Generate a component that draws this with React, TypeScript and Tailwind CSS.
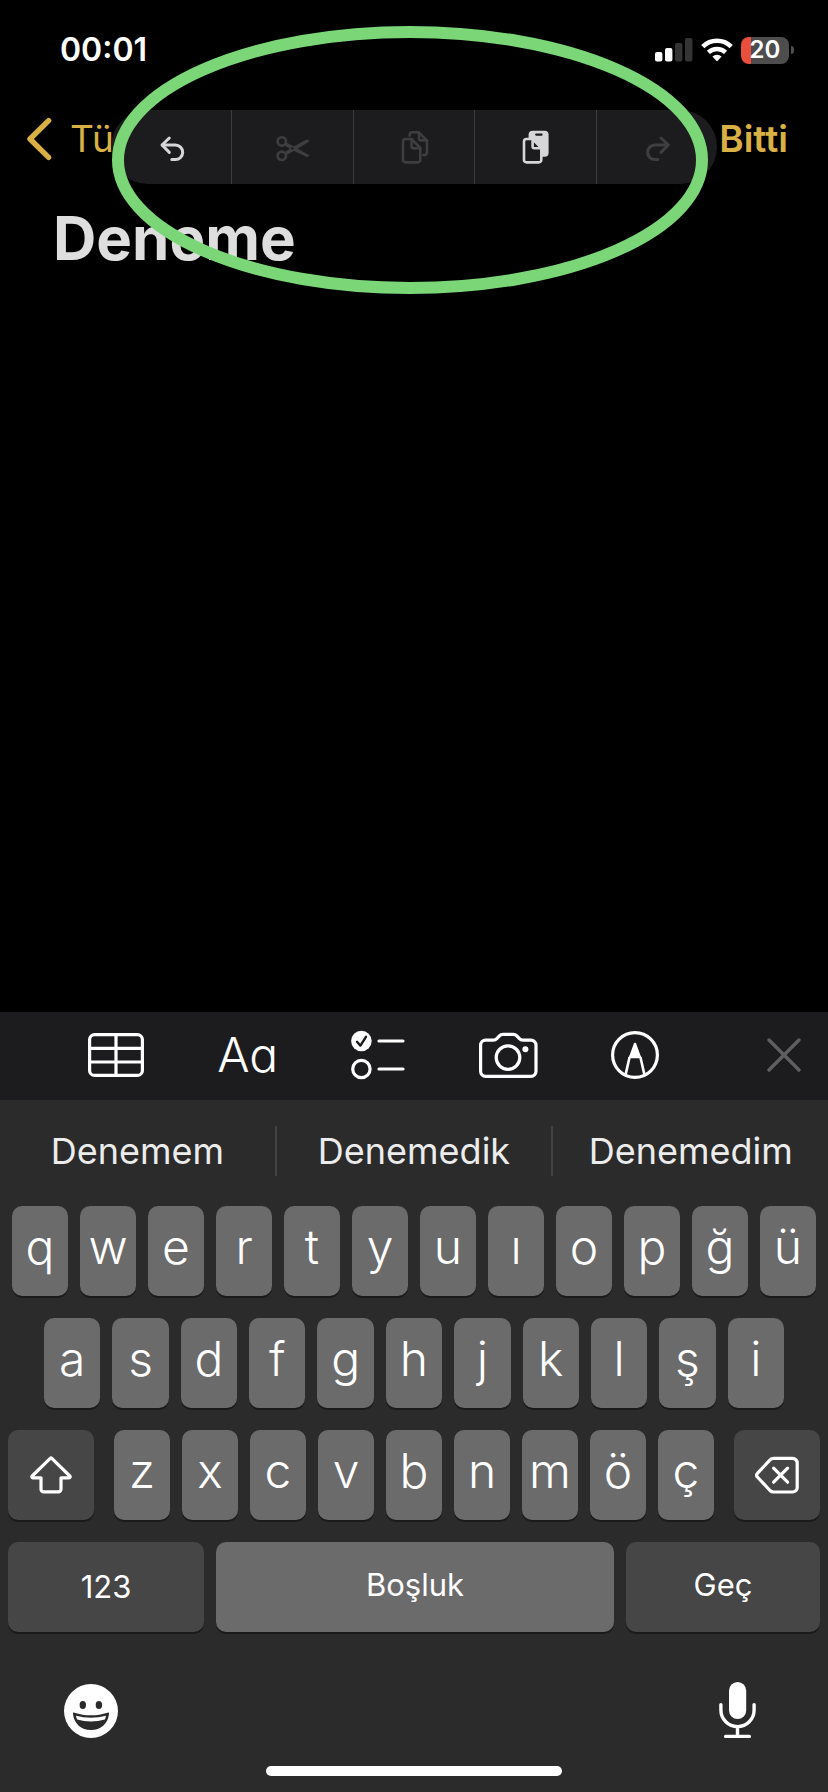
import type { ReactNode } from "react";

const topRow = ["q", "w", "e", "r", "t", "y", "u", "ı", "o", "p", "ğ", "ü"];
const homeRow = ["a", "s", "d", "f", "g", "h", "j", "k", "l", "ş", "i"];
const bottomRow = ["z", "x", "c", "v", "b", "n", "m", "ö", "ç"];
const suggestions = ["Denemem", "Denemedik", "Denemedim"];

function StatusBar() {
  return (
    <header className="flex h-24 items-center justify-between pt-1 pr-[34px] pl-[60px]">
      <time className="text-[32px] leading-10 font-semibold">00:01</time>
      <div className="flex items-center gap-2">
        <svg width="38" height="24" viewBox="0 0 38 24" aria-label="Signal">
          <rect x="0" y="14" width="7.4" height="9.4" rx="2" fill="#fff" />
          <rect x="10" y="10" width="7.4" height="13.4" rx="2" fill="#fff" />
          <rect x="20" y="5" width="7.4" height="18.4" rx="2" fill="#343434" />
          <rect x="30" y="0" width="7.4" height="23.4" rx="2" fill="#343434" />
        </svg>
        <svg width="32" height="24" viewBox="0 0 32 24" fill="none" stroke="#fff" aria-label="Wi-Fi">
          <path d="M1.8 8.6a20.2 20.2 0 0 1 28.4 0" strokeWidth="4.6" />
          <path d="M7.4 14.4a12.4 12.4 0 0 1 17.2 0" strokeWidth="4.4" />
          <path d="M11.4 18.6a6.6 6.6 0 0 1 9.2 0L16 23.4z" fill="#fff" stroke="none" />
        </svg>
        <div className="flex items-center gap-0.5">
          <div className="flex h-[27px] w-12 items-center justify-center rounded-lg bg-linear-to-r from-[#ea4e3d] from-[10px] to-[#4d4d4d] to-[10px] text-2xl leading-7 font-semibold">
            20
          </div>
          <div className="h-2 w-[3px] rounded-r-full bg-[#4d4d4d]" />
        </div>
      </div>
    </header>
  );
}

function MenuCell({ label, disabled, children }: { label: string; disabled?: boolean; children: ReactNode }) {
  return (
    <button
      type="button"
      aria-label={label}
      disabled={disabled}
      className="flex flex-1 items-center justify-center border-[#3c3c3e] text-[#d6d6d8] not-last:border-r disabled:text-[#3e3e41]"
    >
      <svg
        width="36"
        height="36"
        viewBox="0 0 36 36"
        fill="none"
        stroke="currentColor"
        strokeWidth="2.6"
        strokeLinecap="round"
        strokeLinejoin="round"
      >
        {children}
      </svg>
    </button>
  );
}

const frontPage =
  "M15.6 10H9.5A2.5 2.5 0 0 0 7 12.5v18.4a2.5 2.5 0 0 0 2.5 2.5h12.3a2.5 2.5 0 0 0 2.5-2.5V19L15.6 10z";

function EditMenu() {
  return (
    <div className="absolute top-[14px] left-1/2 flex h-[74px] w-[606px] -translate-x-1/2 overflow-hidden rounded-full bg-[#1c1c1e]">
      <MenuCell label="Geri Al">
        <g strokeWidth="3">
          <path d="M16.3 9 9 16l7.3 7.4" />
          <path d="M9.4 16h13a7.3 7.3 0 0 1 0 14.6h-3.6" />
        </g>
      </MenuCell>
      <MenuCell label="Kes" disabled>
        <circle cx="6.8" cy="12.4" r="4.2" />
        <circle cx="6.8" cy="26.8" r="4.2" />
        <g fill="currentColor" stroke="none">
          <path d="m9.4 23.2 7-4.4L30.6 11c1.4-.6 3-.2 3.8 1.400L19.6 21.6l-8.6 4.6z" />
          <path d="m11 13.200 8.400 4.600 15 8.400c-1 1.400-2.400 1.800-3.800 1.200L16.600 20.800l-7.200-4.400z" />
        </g>
        <circle cx="17.4" cy="19.4" r="1.2" fill="#1c1c1e" stroke="none" />
      </MenuCell>
      <MenuCell label="Kopyala" disabled>
        <path d={frontPage} />
        <path d="M15.6 10.4v7.2a1.6 1.6 0 0 0 1.6 1.6h7" />
        <path d="M13.7 6.6v-.8a2.5 2.5 0 0 1 2.5-2.5h6.6L31 11.6v12a2.5 2.5 0 0 1-2.5 2.5h-1" />
        <path d="M23 3.6v6.2a1.6 1.6 0 0 0 1.6 1.6H31" />
      </MenuCell>
      <MenuCell label="Yapıştır">
        <rect x="11.6" y="1.8" width="20" height="26" rx="4" fill="currentColor" stroke="none" />
        <path d="M19.2 5.6h5.4" stroke="#1c1c1e" strokeWidth="2.2" />
        <path d={frontPage} fill="#1c1c1e" />
        <path d="M15.6 10.4v7.2a1.6 1.6 0 0 0 1.6 1.6h7" />
      </MenuCell>
      <MenuCell label="Yinele" disabled>
        <g strokeWidth="3">
          <path d="m22 9 7.3 7-7.3 7.4" />
          <path d="M28.9 16h-13a7.3 7.3 0 0 0 0 14.6h3" />
        </g>
      </MenuCell>
    </div>
  );
}

function NavBar() {
  return (
    <nav className="relative flex h-[86px] items-center justify-between pr-10 pl-[26px] text-[37px] text-[#d9b044]">
      <a href="#notes" className="flex items-center gap-[18px]">
        <svg width="26" height="44" viewBox="0 0 26 44" fill="none" stroke="currentColor" strokeWidth="5.4" strokeLinecap="round" strokeLinejoin="round">
          <path d="M22.6 3.6 4 22l18.6 18.4" />
        </svg>
        Tüm
      </a>
      <button type="button" className="font-semibold">
        Bitti
      </button>
      <EditMenu />
    </nav>
  );
}

function FormatBar() {
  return (
    <div className="flex h-[88px] items-center gap-[108px] bg-[#1c1c1e] pr-[27px] pb-0.5 pl-[88px]">
      <div className="flex flex-1 items-center justify-between">
        <button type="button" aria-label="Tablo">
          <svg width="56" height="44" viewBox="0 0 56 44" fill="none" stroke="#fff" strokeWidth="3.2">
            <rect x="1.6" y="1.6" width="52.8" height="40.8" rx="5" />
            <path d="M28 2v40M2 15.4h52M2 29h52" />
          </svg>
        </button>
        <button type="button" className="text-5xl font-light [font-feature-settings:'cv11']">
          Aa
        </button>
        <button type="button" aria-label="Denetim listesi">
          <svg width="54" height="50" viewBox="0 0 54 50" fill="none" stroke="#fff" strokeWidth="3.2" strokeLinecap="round" strokeLinejoin="round">
            <circle cx="10.4" cy="11" r="10.3" fill="#fff" stroke="none" />
            <path d="m6 11.8 3.4 3.8 5.6-8.8" stroke="#1c1c1e" strokeWidth="2.4" />
            <circle cx="10.4" cy="39" r="8.7" />
            <path d="M28 11h24M28 39h24" />
          </svg>
        </button>
        <button type="button" aria-label="Kamera">
          <svg width="59" height="46" viewBox="0 0 59 46" fill="none" stroke="#fff" strokeWidth="3.2" strokeLinejoin="round">
            <path d="M6.6 8.2h7.6c1.6 0 2.6-.4 3.6-1.5l2.6-2.8c1-1.1 2-1.6 3.6-1.6h10.2c1.6 0 2.6.5 3.6 1.6l2.6 2.8c1 1.1 2 1.5 3.6 1.5h8a5 5 0 0 1 5 5v26.1a5 5 0 0 1-5 5H6.6a5 5 0 0 1-5-5V13.2a5 5 0 0 1 5-5z" />
            <circle cx="29" cy="25.6" r="11.8" />
            <circle cx="46.4" cy="17.2" r="3" fill="#fff" stroke="none" />
          </svg>
        </button>
        <button type="button" aria-label="İşaretleme">
          <svg width="48" height="48" viewBox="0 0 48 48" fill="none" stroke="#fff" strokeWidth="3.2">
            <circle cx="24" cy="24" r="22.4" />
            <path d="M18.4 26h11.2M18.6 26l-4 17.6M29.4 26l4 17.6" strokeWidth="2.6" />
            <path d="M24 11.8c.8 0 1.2.6 1.4 1.4L30.4 27H17.6l5-13.8c.2-.8.6-1.4 1.4-1.4z" fill="#fff" stroke="none" />
          </svg>
        </button>
      </div>
      <button type="button" aria-label="Kapat">
        <svg width="34" height="34" viewBox="0 0 34 34" stroke="#5f5f61" strokeWidth="3.4" strokeLinecap="round">
          <path d="m2 2 30 30M32 2 2 32" />
        </svg>
      </button>
    </div>
  );
}

function LetterKey({ letter }: { letter: string }) {
  return (
    <button
      type="button"
      className="flex h-[90px] min-w-0 flex-1 items-center justify-center rounded-[10px] bg-[#6b6b6b] pb-2 text-5xl font-[350] shadow-[0_2px_0_#1a1a1a]"
    >
      {letter}
    </button>
  );
}

function Keyboard() {
  return (
    <section className="bg-[#2b2b2b]">
      <div className="flex h-[102px] items-center">
        {suggestions.map((word) => (
          <button
            key={word}
            type="button"
            className="flex h-[50px] flex-1 items-center justify-center border-[#424242] text-4xl text-[#ececec] not-last:border-r-2"
          >
            {word}
          </button>
        ))}
      </div>

      <div className="flex flex-col gap-[22px] px-2 pt-1">
        <div className="flex gap-3 px-1">
          {topRow.map((letter) => (
            <LetterKey key={letter} letter={letter} />
          ))}
        </div>

        <div className="flex gap-3 px-9">
          {homeRow.map((letter) => (
            <LetterKey key={letter} letter={letter} />
          ))}
        </div>

        <div className="flex gap-5">
          <button
            type="button"
            aria-label="Shift"
            className="flex w-[86px] items-center justify-center rounded-[10px] bg-[#464646] shadow-[0_2px_0_#1a1a1a]"
          >
            <svg width="42" height="38" viewBox="0 0 42 38" fill="none" stroke="#fff" strokeWidth="3.2" strokeLinejoin="round">
              <path d="M20.2 2.4a1.2 1.2 0 0 1 1.6 0l18 17.6c.8.8.4 1.8-.8 1.8h-8v11.4a2.6 2.6 0 0 1-2.6 2.6H13.6a2.6 2.6 0 0 1-2.6-2.6V21.8H3c-1.2 0-1.6-1-.8-1.8z" />
            </svg>
          </button>
          <div className="flex flex-1 gap-3">
            {bottomRow.map((letter) => (
              <LetterKey key={letter} letter={letter} />
            ))}
          </div>
          <button
            type="button"
            aria-label="Sil"
            className="flex w-[86px] items-center justify-center rounded-[10px] bg-[#464646] shadow-[0_2px_0_#1a1a1a]"
          >
            <svg width="44" height="38" viewBox="0 0 44 38" fill="none" stroke="#fff" strokeWidth="3.2" strokeLinecap="round" strokeLinejoin="round">
              <path d="M18.6 2.4h19A4.6 4.6 0 0 1 42.200 7v24.4a4.6 4.6 0 0 1-4.6 4.6h-19c-1.4 0-2.6-.5-3.6-1.5L2.4 21c-1.1-1.1-1.1-2.5 0-3.6L15 3.900c1-1 2.200-1.500 3.600-1.500z" />
              <path d="m18.6 12.2 14 14M32.6 12.2l-14 14" />
            </svg>
          </button>
        </div>

        <div className="flex h-[90px] gap-3 text-[31px]">
          <button type="button" className="w-[196px] rounded-[10px] bg-[#464646] shadow-[0_2px_0_#1a1a1a]">
            123
          </button>
          <button type="button" className="flex-1 rounded-[10px] bg-[#6b6b6b] pb-1 shadow-[0_2px_0_#1a1a1a]">
            Boşluk
          </button>
          <button type="button" className="w-[194px] rounded-[10px] bg-[#464646] pb-1 shadow-[0_2px_0_#1a1a1a]">
            Geç
          </button>
        </div>
      </div>

      <div className="flex items-center justify-between pt-[50px] pr-[72px] pl-16">
        <button type="button" aria-label="Emoji">
          <svg width="54" height="54" viewBox="0 0 54 54">
            <circle cx="27" cy="27" r="27" fill="#fff" />
            <g fill="#2b2b2b">
              <ellipse cx="18.8" cy="21" rx="3.2" ry="4" />
              <ellipse cx="34.9" cy="21" rx="3.2" ry="4" />
              <path d="M10.4 28.7c10.6 3.4 22.6 3.4 33.2 0 1-.3 1.5.2 1.4 1.2C44 39.6 36.8 46 27 46S10 39.6 9 29.900c-.1-1 .4-1.5 1.4-1.2z" />
            </g>
            <path d="M12 31.8c9.6 2.6 20.4 2.6 30 0-.2 1.4-.6 2.700-1.200 3.800-8.800 2.600-18.800 2.600-27.600 0-.6-1.100-1-2.400-1.200-3.800z" fill="#fff" />
          </svg>
        </button>
        <button type="button" aria-label="Dikte">
          <svg width="37" height="58" viewBox="0 0 37 58" fill="none" stroke="#fff" strokeWidth="3.4" strokeLinecap="round">
            <rect x="10" y="0" width="17.2" height="37" rx="8.6" fill="#fff" stroke="none" />
            <path d="M1.9 22.6V28a16.6 16.6 0 0 0 33.2 0v-5.4M18.5 45v9M6.6 54.4h23.8" />
          </svg>
        </button>
      </div>

      <div className="flex justify-center pt-[26px] pb-4">
        <div className="h-[10px] w-[296px] rounded-full bg-white" />
      </div>
    </section>
  );
}

export default function App() {
  return (
    <div className="relative flex min-h-screen flex-col bg-black font-['Inter',sans-serif] text-white">
      <StatusBar />
      <NavBar />

      <main className="flex-1 px-[53px] pt-5">
        <input
          type="text"
          aria-label="Not başlığı"
          defaultValue="Deneme"
          className="block h-[72px] w-full bg-transparent text-6xl font-bold text-[#dedede] outline-none"
        />
      </main>

      <FormatBar />
      <Keyboard />

      {/* green marker ring drawn over the edit menu */}
      <svg
        className="pointer-events-none absolute top-[26px] left-28"
        width="596"
        height="268"
        viewBox="0 0 596 268"
        fill="none"
      >
        <ellipse cx="298" cy="134" rx="292" ry="128" stroke="#7ad677" strokeWidth="12" />
      </svg>
    </div>
  );
}
